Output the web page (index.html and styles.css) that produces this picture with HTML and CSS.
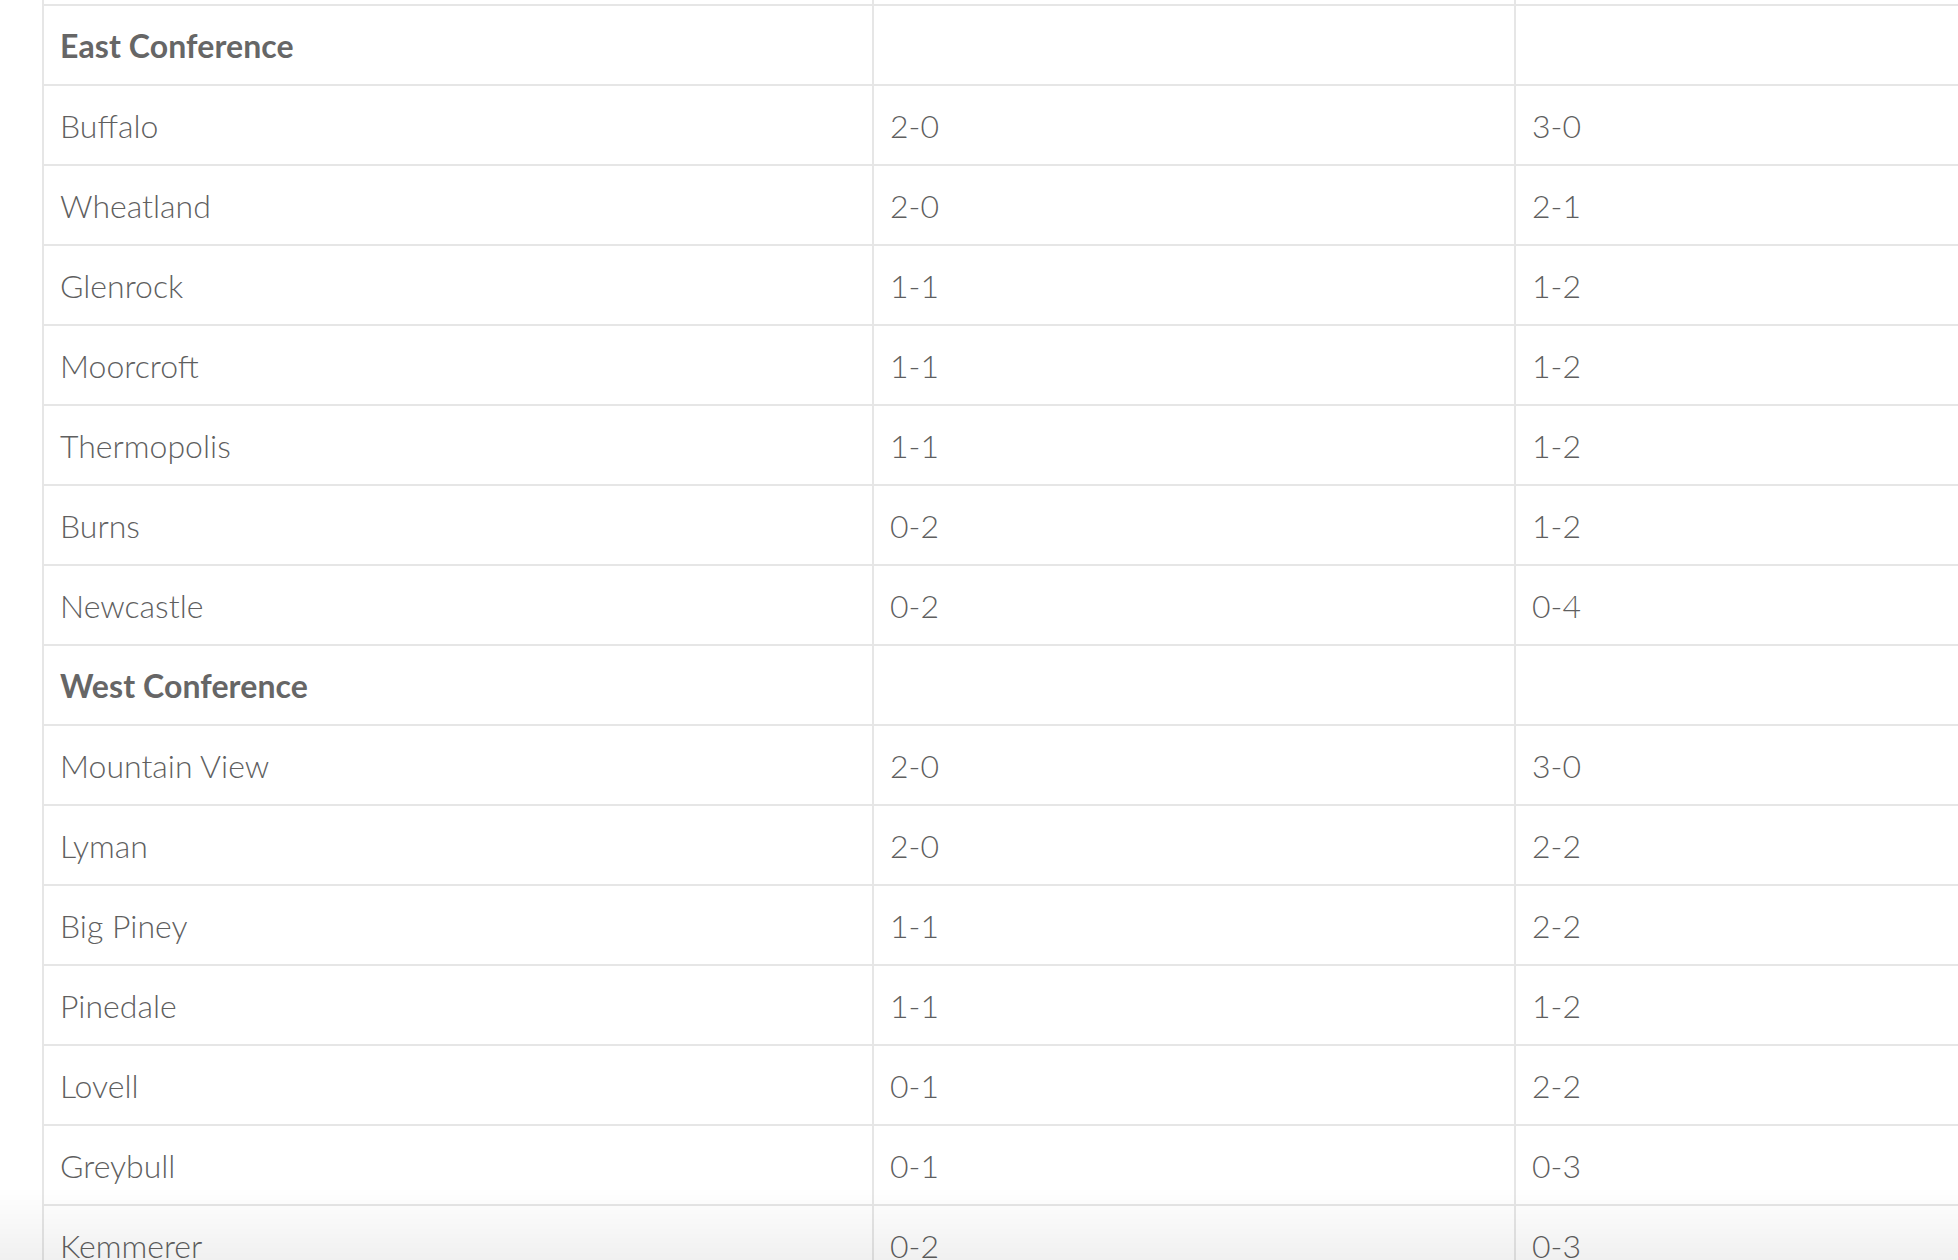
FILE: index.html
```html
<!DOCTYPE html>
<html lang="en">
<head>
<meta charset="utf-8">
<title>Standings</title>
<link rel="stylesheet" href="styles.css">
</head>
<body>
<div class="page">
  <table class="standings">
    <colgroup>
      <col class="col-team">
      <col class="col-conf">
      <col class="col-all">
    </colgroup>
    <tbody>
      <tr class="spacer-row"><td></td><td></td><td></td></tr>
      <tr class="group"><td>East Conference</td><td></td><td></td></tr>
      <tr><td>Buffalo</td><td>2-0</td><td>3-0</td></tr>
      <tr><td>Wheatland</td><td>2-0</td><td>2-1</td></tr>
      <tr><td>Glenrock</td><td>1-1</td><td>1-2</td></tr>
      <tr><td>Moorcroft</td><td>1-1</td><td>1-2</td></tr>
      <tr><td>Thermopolis</td><td>1-1</td><td>1-2</td></tr>
      <tr><td>Burns</td><td>0-2</td><td>1-2</td></tr>
      <tr><td>Newcastle</td><td>0-2</td><td>0-4</td></tr>
      <tr class="group"><td>West Conference</td><td></td><td></td></tr>
      <tr><td>Mountain View</td><td>2-0</td><td>3-0</td></tr>
      <tr><td>Lyman</td><td>2-0</td><td>2-2</td></tr>
      <tr><td>Big Piney</td><td>1-1</td><td>2-2</td></tr>
      <tr><td>Pinedale</td><td>1-1</td><td>1-2</td></tr>
      <tr><td>Lovell</td><td>0-1</td><td>2-2</td></tr>
      <tr><td>Greybull</td><td>0-1</td><td>0-3</td></tr>
      <tr><td>Kemmerer</td><td>0-2</td><td>0-3</td></tr>
    </tbody>
  </table>
</div>
<div class="bottom-shade"></div>
</body>
</html>
```
FILE: styles.css
```css
html, body {
  margin: 0;
  padding: 0;
  background: #ffffff;
  overflow: hidden;
}

.page {
  width: 100%;
  height: 1260px;
  overflow: hidden;
}

.standings {
  margin: -76px 0 0 42px;
  width: 2200px;
  table-layout: fixed;
  border-collapse: separate;
  border-spacing: 0;
  font-family: Lato, "Open Sans", sans-serif;
  font-size: 32px;
  font-weight: 300;
  color: #5f5f5f;
}

.col-team { width: 830px; }
.col-conf { width: 642px; }

.standings td {
  box-sizing: border-box;
  height: 80px;
  padding: 0 16px;
  border-top: 2px solid #e6e6e6;
  border-left: 2px solid #e6e6e6;
  text-align: left;
  vertical-align: middle;
  line-height: normal;
  white-space: nowrap;
}

.standings .group td:first-child {
  font-weight: 700;
  color: #666666;
  letter-spacing: 0.1px;
}

.bottom-shade {
  position: fixed;
  left: 0;
  right: 0;
  bottom: 0;
  height: 72px;
  background: linear-gradient(to bottom, rgba(0, 0, 0, 0), rgba(0, 0, 0, 0.06));
  pointer-events: none;
}
```
